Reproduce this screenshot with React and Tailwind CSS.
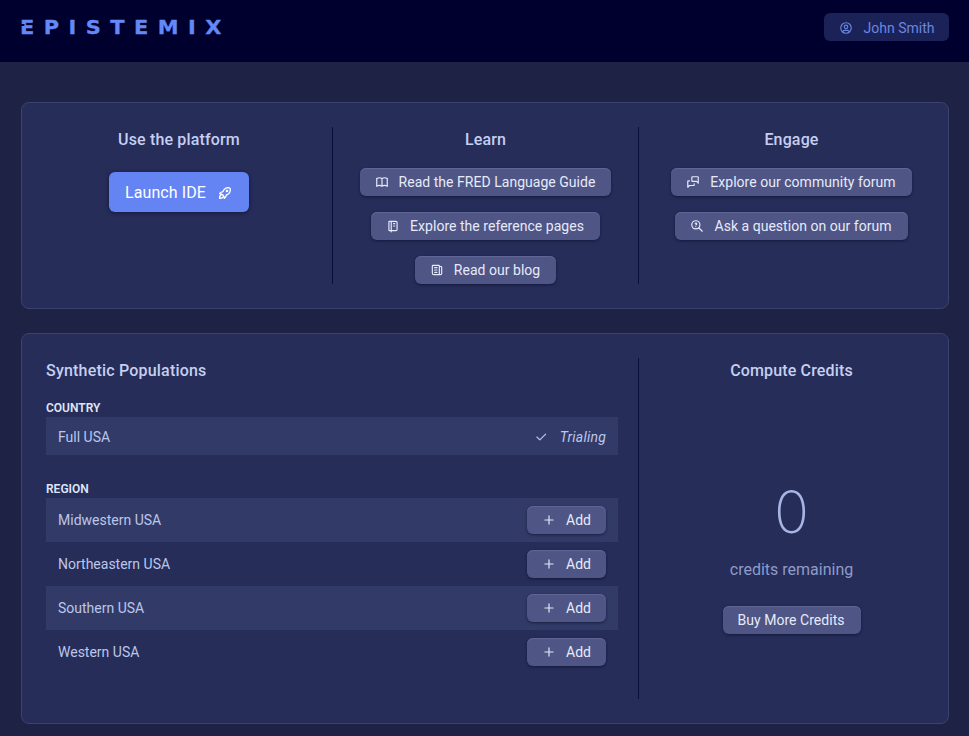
import React from 'react';
import { TbBook, TbCheck, TbMessages, TbNews, TbNotebook, TbPlus, TbRocket, TbUserCircle, TbZoomQuestion } from 'react-icons/tb';

function Btn({ icon: Icon, children, className = 'pr-4' }) {
  return (
    <button className={`h-7 inline-flex items-center gap-2.5 pl-[15px] rounded-md bg-[#4f5585] text-sm tracking-[0.03px] text-[#e6eafa] shadow-[inset_0_1px_0_#5f6595,0_1px_3px_rgba(10,12,40,0.6)] ${className}`}>
      {Icon && <Icon className="w-3.5 h-3.5" />}
      <span>{children}</span>
    </button>
  );
}

function Row({ name, striped, children, className = 'h-11' }) {
  return (
    <div className={`flex items-center justify-between pl-3 pr-3 text-sm text-[#bcc6ea] ${className} ${striped ? 'bg-[#323b68]' : ''}`}>
      <span>{name}</span>
      {children}
    </div>
  );
}

function AddBtn() {
  return <Btn icon={TbPlus} className="pr-[15px]">Add</Btn>;
}

export default function App() {
  return (
    <div className="min-h-screen bg-[#1e2346] font-['Roboto',sans-serif]">
      {/* Header */}
      <header className="h-[62px] bg-[#00002f] flex items-start justify-between pl-5 pr-5 pt-[13px]">
        <div className="h-7 flex items-center">
          <div className="relative font-['DejaVu_Sans',sans-serif] font-bold text-[19px] tracking-[8.6px] text-[#6488f5] leading-none origin-left scale-x-[1.1] [-webkit-text-stroke:0.3px_#6488f5]">
            EPISTEMIX
            <span className="absolute left-0 top-[6px] w-[4px] h-[2px] bg-[#00002f]"></span>
          </div>
        </div>
        <button className="h-7 w-[125px] pt-px flex items-center justify-center gap-[11px] rounded-md bg-[#1a2258] text-sm text-[#6b86e0]">
          <TbUserCircle className="w-3.5 h-3.5" />
          <span>John Smith</span>
        </button>
      </header>

      <main className="pl-[21px] pr-5 pt-10 flex flex-col gap-6">
        {/* Top card */}
        <section className="bg-[#262d59] border border-[#3a4270] rounded-lg px-1 py-6 grid grid-cols-3">
          <div className="flex flex-col items-center">
            <h2 className="text-base font-medium tracking-[0.15px] text-[#c5cff0] leading-[25px]">Use the platform</h2>
            <button className="mt-[20px] h-10 w-[140px] pt-px flex items-center justify-center gap-[11px] rounded-md bg-[#6484f4] text-base tracking-[0.1px] text-white shadow-[0_1px_4px_rgba(10,12,40,0.6)]">
              <span>Launch IDE</span>
              <TbRocket className="w-4 h-4" />
            </button>
          </div>
          <div className="flex flex-col items-center gap-4 border-l border-[#0b0d3a]">
            <h2 className="text-base font-medium tracking-[0.15px] text-[#c5cff0] leading-[25px]">Learn</h2>
            <Btn icon={TbBook}>Read the FRED Language Guide</Btn>
            <Btn icon={TbNotebook}>Explore the reference pages</Btn>
            <Btn icon={TbNews}>Read our blog</Btn>
          </div>
          <div className="flex flex-col items-center gap-4 border-l border-[#0b0d3a]">
            <h2 className="text-base font-medium tracking-[0.15px] text-[#c5cff0] leading-[25px]">Engage</h2>
            <Btn icon={TbMessages}>Explore our community forum</Btn>
            <Btn icon={TbZoomQuestion}>Ask a question on our forum</Btn>
          </div>
        </section>

        {/* Bottom card */}
        <section className="bg-[#262d59] border border-[#3a4270] rounded-lg px-1 py-6 grid grid-cols-3">
          <div className="col-span-2 px-5 pb-[25px]">
            <h2 className="text-base font-medium tracking-[0.2px] text-[#c5cff0] leading-[26px]">Synthetic Populations</h2>
            <h3 className="mt-4 text-xs font-semibold text-[#dfe5f8] leading-[17px] uppercase">Country</h3>
            <Row name="Full USA" striped className="h-[38px] pt-px">
              <span className="flex items-center gap-3 italic tracking-[0.2px] text-[#bcc6ea]">
                <TbCheck className="w-3.5 h-3.5" />
                Trialing
              </span>
            </Row>
            <h3 className="mt-[26px] text-xs font-semibold text-[#dfe5f8] leading-[17px] uppercase">Region</h3>
            <Row name="Midwestern USA" striped><AddBtn /></Row>
            <Row name="Northeastern USA"><AddBtn /></Row>
            <Row name="Southern USA" striped><AddBtn /></Row>
            <Row name="Western USA"><AddBtn /></Row>
          </div>
          <div className="flex flex-col items-center border-l border-[#0b0d3a]">
            <h2 className="text-base font-medium tracking-[0.15px] text-[#c5cff0] leading-[26px]">Compute Credits</h2>
            <div className="mt-[95px] font-['Inter',sans-serif] text-[58px] font-extralight text-[#a8b5e2] leading-[66px]">0</div>
            <div className="mt-[13px] text-base text-[#8f9bc8] leading-6">credits remaining</div>
            <Btn className="mt-6 pr-4">Buy More Credits</Btn>
          </div>
        </section>
      </main>
    </div>
  );
}
